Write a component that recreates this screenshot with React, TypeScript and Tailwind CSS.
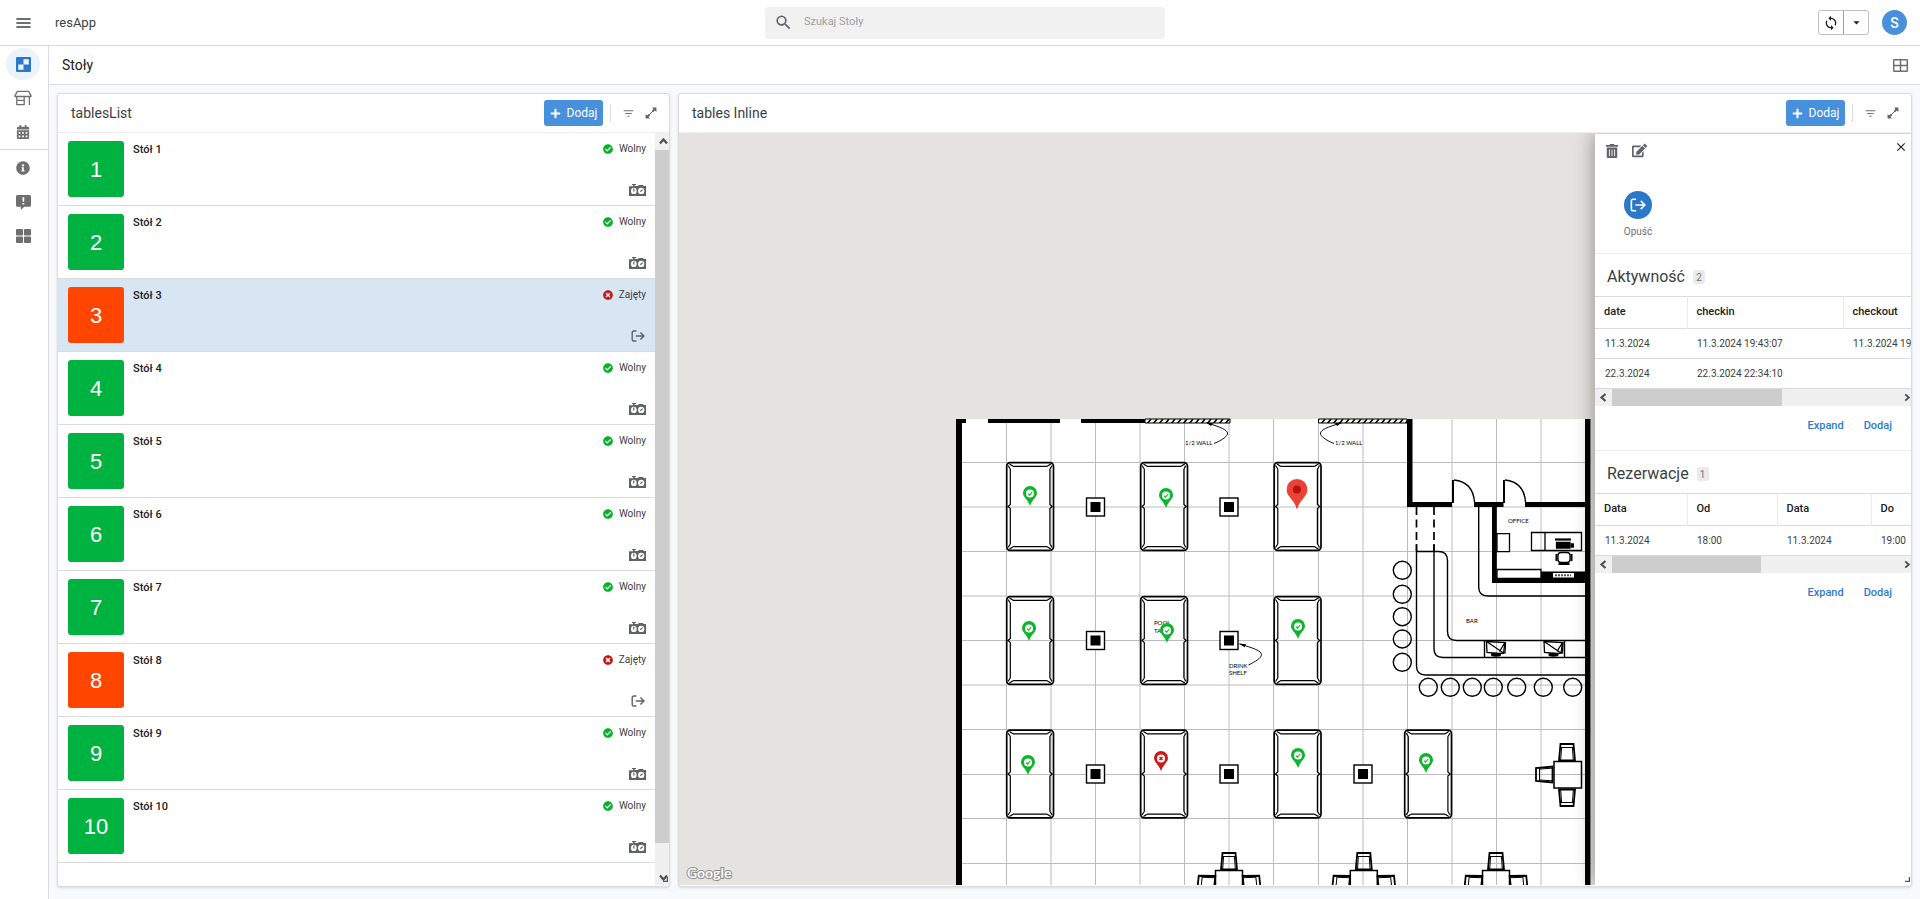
import React from "react";
import { MdMenu, MdSearch, MdSync, MdArrowDropDown, MdFilterList, MdClose } from "react-icons/md";
import { FaCalendarAlt, FaInfoCircle, FaCheckCircle, FaTimesCircle, FaTrashAlt, FaEdit, FaPlus } from "react-icons/fa";

/* ---------- icons ---------- */

function BoardIcon() {
  return (
    <svg width="15" height="15" viewBox="0 0 15 15" aria-hidden="true">
      <rect width="15" height="15" rx="1" fill="#2c78c8" />
      <rect x="7.5" y="2.2" width="5.3" height="5.3" fill="#eaf3fc" />
      <rect x="2.2" y="7.5" width="5.3" height="5.3" fill="#eaf3fc" />
    </svg>
  );
}

function StoreIcon() {
  return (
    <svg width="18" height="16" viewBox="0 0 18 16" fill="none" stroke="#6f6f6f" strokeWidth="1.3" aria-hidden="true">
      <path d="M3.4 1.4h11.2l2.4 4.2v.9H1v-.9z" strokeLinejoin="round" />
      <path d="M2.8 6.5v8.1h7.4V6.5M15.4 6.5v8.6M2.8 10.4h7.4" />
    </svg>
  );
}

function FeedbackIcon() {
  return (
    <svg width="15" height="15" viewBox="0 0 15 15" aria-hidden="true">
      <path d="M1.5 0h12Q15 0 15 1.5v8.700q0 1.500-1.500 1.500H8.300L4.800 15v-3.300H1.500Q0 11.700 0 10.200V1.500Q0 0 1.500 0z" fill="#6f6f6f" />
      <path d="M6.400 2.200h2l-.3 4.600H6.700zM6.500 7.900h1.800v1.700H6.500z" fill="#fff" />
    </svg>
  );
}

function TilesIcon() {
  return (
    <svg width="15" height="14" viewBox="0 0 15 14" fill="#6f6f6f" aria-hidden="true">
      <rect width="7" height="6.5" rx="1" />
      <rect x="8" width="7" height="6.5" rx="1" />
      <rect y="7.5" width="7" height="6.5" rx="1" />
      <rect x="8" y="7.5" width="7" height="6.5" rx="1" />
    </svg>
  );
}

function GridIcon() {
  return (
    <svg width="15" height="13" viewBox="0 0 15 13" fill="none" stroke="#6f6f6f" strokeWidth="1.5" aria-hidden="true">
      <rect x=".7" y=".7" width="13.6" height="11.6" rx=".8" />
      <path d="M7.5 .7v11.6M.7 6.5h13.6" />
    </svg>
  );
}

function ExpandIcon() {
  return (
    <svg width="12" height="12" viewBox="0 0 12 12" fill="#5f6368" aria-hidden="true">
      <path d="M7 .6h4.4V5L9.9 3.5 8.3 5.1 6.9 3.7 8.500 2.100zM5 11.400H.6V7l1.500 1.500 1.600-1.600 1.400 1.400-1.600 1.600z" />
      <path d="M2 10 10 2" stroke="#5f6368" strokeWidth="1" />
    </svg>
  );
}

function ExitIcon({ size = 14, color = "#5f6368" }: { size?: number; color?: string }) {
  return (
    <svg width={size} height={size} viewBox="0 0 14 14" fill="none" stroke={color} strokeWidth="1.4" aria-hidden="true">
      <path d="M5.400 2H2.800Q1.200 2 1.200 3.600v6.800q0 1.600 1.600 1.600h2.600" />
      <path d="M4.700 7h8.200M9.400 3.400 13 7l-3.600 3.600" />
    </svg>
  );
}

function TimerIcon() {
  return (
    <svg width="17" height="12" viewBox="0 0 17 12" aria-hidden="true">
      <path d="M3 0h4v1H5.700v1H9l.8-.9h4L14.800 2H17v10H0V2.200h4V1H3z" fill="#5f6368" />
      <ellipse cx="4.800" cy="6.900" rx="2.800" ry="3.200" fill="#fff" />
      <ellipse cx="12.200" cy="6.900" rx="3.100" ry="3.200" fill="#fff" />
      <path d="M4.800 4.600v2.900M11.300 7.800l2.300-2.200" stroke="#5f6368" strokeWidth="1.200" />
    </svg>
  );
}

function Chevron({ dir }: { dir: "up" | "down" | "left" | "right" }) {
  const d = {
    up: "M1 6.500 4.500 2.500 8 6.500",
    down: "M1 2.500 4.500 6.500 8 2.500",
    left: "M6.500 1 2.500 4.500 6.500 8",
    right: "M2.500 1 6.500 4.500 2.500 8",
  }[dir];
  return (
    <svg width="9" height="9" viewBox="0 0 9 9" fill="none" stroke="#505050" strokeWidth="2.200" aria-hidden="true">
      <path d={d} />
    </svg>
  );
}

function ResizeCorner() {
  return (
    <svg width="5" height="5" viewBox="0 0 5 5" className="absolute right-px bottom-[3px]" aria-hidden="true">
      <path d="M0 4.500H4.500V0" fill="none" stroke="#555" strokeWidth="1.500" />
    </svg>
  );
}

/* ---------- card ---------- */

function Card({ title, children }: { title: string; children: React.ReactNode }) {
  return (
    <section className="flex min-h-0 min-w-0 flex-col rounded-[3px] border border-[#dadce0] bg-white pb-px shadow-sm">
      <header className="flex h-[39px] shrink-0 items-center border-b border-[#eeeeee] pr-3 pl-[13px]">
        <h2 className="flex-1 text-sm text-[#3c4043]">{title}</h2>
        <button className="flex h-[26px] w-[59px] items-center justify-center gap-[6px] rounded-[3px] bg-[#4790dc] text-xs text-white">
          <FaPlus size={11} />
          Dodaj
        </button>
        <span className="mr-[11px] ml-[7px] h-[18px] w-px bg-[#dadce0]" />
        <button aria-label="Filtruj" className="mr-[10px] text-[#6f6f6f]">
          <MdFilterList size={13} />
        </button>
        <button aria-label="Rozwiń">
          <ExpandIcon />
        </button>
      </header>
      {children}
    </section>
  );
}

/* ---------- list ---------- */

const tables = [
  { n: 1, busy: false },
  { n: 2, busy: false },
  { n: 3, busy: true },
  { n: 4, busy: false },
  { n: 5, busy: false },
  { n: 6, busy: false },
  { n: 7, busy: false },
  { n: 8, busy: true },
  { n: 9, busy: false },
  { n: 10, busy: false },
];

function TableList() {
  return (
    <div className="relative flex min-h-0 flex-1">
      <ul className="min-w-0 flex-1 overflow-hidden">
        {tables.map(({ n, busy }) => (
          <li
            key={n}
            className={`flex h-[73px] border-b border-[#dadce0] py-2 pr-[9px] pl-[10px] ${n === 3 ? "bg-[#d8e6f3]" : "bg-white"}`}
          >
            <span
              className={`flex size-14 items-center justify-center rounded-[3px] font-['Liberation_Sans',sans-serif] text-[22px] text-white ${
                busy ? "bg-[#ff4500]" : "bg-[#00b341]"
              }`}
            >
              {n}
            </span>
            <h3 className="ml-[9px] flex-1 text-[11px] leading-[17px] font-medium text-[#202124]">Stół {n}</h3>
            <div className="flex flex-col items-end justify-between">
              <span className="flex items-center gap-[6px] text-[10px] leading-4 text-[#3c4043]">
                {busy ? <FaTimesCircle size={10} color="#cc1010" /> : <FaCheckCircle size={10} color="#00b327" />}
                {busy ? "Zajęty" : "Wolny"}
              </span>
              <button aria-label={busy ? "Opuść" : "Zajmij"} className="flex h-[14px] w-[17px] items-center justify-center">
                {busy ? <ExitIcon /> : <TimerIcon />}
              </button>
            </div>
          </li>
        ))}
      </ul>
      <div className="flex w-[14px] flex-col items-center bg-[#f0f0f0]">
        <span className="flex h-[17px] items-center pl-[3px]">
          <Chevron dir="up" />
        </span>
        <span className="w-full flex-1 bg-[#cdcdcd]" />
        <span className="flex h-[42px] items-end pb-[3px] pl-[3px]">
          <Chevron dir="down" />
        </span>
      </div>
      <ResizeCorner />
    </div>
  );
}

/* ---------- floor plan ---------- */

const columnsX = [1006.500, 1051, 1095.500, 1140, 1184.500, 1229, 1273.500, 1318.500, 1363, 1407.500, 1452, 1496.500, 1541];
const rowsY = [462.500, 507, 551.500, 596, 640.500, 685, 729.500, 774.500, 818.500, 863.500];

const poolTables: [number, number][] = [
  [1006, 462], [1140, 462], [1273.500, 462],
  [1006, 596], [1140, 596], [1273.500, 596],
  [1006, 729.500], [1140, 729.500], [1273.500, 729.500], [1404, 729.500],
];

const pillars: [number, number][] = [
  [1095.500, 507], [1229, 507], [1095.500, 640.500], [1229, 640.500], [1095.500, 774], [1229, 774], [1363, 774],
];

function PoolTable({ x, y }: { x: number; y: number }) {
  return (
    <g transform={`translate(${x} ${y})`} fill="none" stroke="#000">
      <rect x=".7" y=".7" width="46.800" height="87.600" rx="3.500" strokeWidth="1.700" />
      <path
        strokeWidth="1.200"
        d="M4.300 7v35.500L2 44.500l2.300 2V82M43.900 7v35.500l2.300 2-2.300 2V82M7 4.300h34.200M7 84.700h34.200M2 3.500 4.300 7M3.500 2 7 4.300M46.200 3.500 43.900 7M44.700 2l-3.500 2.300M2 85.500 4.300 82M3.500 87 7 84.700M46.200 85.500 43.900 82M44.700 87l-3.500-2.300"
      />
    </g>
  );
}

function Chair({ x, y, turn }: { x: number; y: number; turn: number }) {
  return (
    <g transform={`translate(${x} ${y}) rotate(${turn})`} fill="none" stroke="#000">
      <path d="M-6.500-17h13L8-.5H-8z" strokeWidth="1.800" />
      <path d="M-6.500-13.500h13M-5.500-13-6.300-1M5.500-13 6.300-1" strokeWidth="1" />
    </g>
  );
}

function CardTable({ x, y }: { x: number; y: number }) {
  return (
    <g>
      <rect x={x - 13.500} y={y - 13.500} width="27" height="27" fill="none" stroke="#000" strokeWidth="1.500" />
      <Chair x={x} y={y - 14} turn={0} />
      <Chair x={x - 14} y={y} turn={-84} />
      <Chair x={x + 14} y={y} turn={84} />
    </g>
  );
}

function Till({ x }: { x: number }) {
  return (
    <g stroke="#000" fill="none" strokeWidth="1.300">
      <path d={`M${x} 641.500l19 1-.5 10.500-6 .5-12-1z`} />
      <path d={`M${x} 641.500l17 11.500 1.500-10.500-5.500 9`} />
      <ellipse cx={x + 9.500} cy="654.800" rx="4.500" ry="1.300" fill="#000" />
    </g>
  );
}

function FloorPlan() {
  return (
    <svg width="1232" height="752" viewBox="679 133 1232 752" className="max-w-none" role="img" aria-label="Plan sali">
      <defs>
        <pattern id="hatch" width="6" height="5" patternUnits="userSpaceOnUse" patternTransform="translate(0 419)">
          <path d="M1 5 5 0" stroke="#000" strokeWidth="1.600" />
        </pattern>
      </defs>
      <rect x="956" y="419" width="635" height="466" fill="#fff" />
      <g stroke="#bcbcbc" strokeWidth="1">
        {columnsX.map((x) => (
          <path key={x} d={`M${x} 419V885`} />
        ))}
        {rowsY.map((y) => (
          <path key={y} d={`M962 ${y}H1591`} />
        ))}
      </g>

      {/* outer and inner walls */}
      <g fill="#000">
        <path d="M956 419h10v4h-4v462h-6zM988 419h72v4h-72zM1081 419h64v4h-64zM1585 419h5.500v466H1585z" />
        <path d="M1407 419h5.500v83H1452v5h-45zM1474 502h29.500v5H1474zM1525 502h60v5h-60z" />
        <path d="M1492 507h4.800v71H1541v-6.500h44V583h-93z" />
      </g>
      <g stroke="#000" strokeWidth="1">
        <path d="M1145 419h85v4h-85z" fill="url(#hatch)" />
        <path d="M1318.500 419h88.500v4h-88.500z" fill="url(#hatch)" />
      </g>
      <rect x="1553" y="573" width="21" height="4.500" fill="#fff" />
      <path d="M1555 575.300h16" stroke="#555" strokeWidth="2" strokeDasharray="2 1" />

      {/* doors */}
      <g fill="none" stroke="#000" strokeWidth="1.400">
        <path d="M1454 480q19 2 20.500 22M1505 480q19 2 20.500 22" />
        <path d="M1453 503V480M1504 503V480" strokeWidth="2" />
      </g>

      {/* bar counter */}
      <g fill="none" stroke="#000" strokeWidth="1.400">
        <path d="M1416.500 507v44M1434 507v44" strokeWidth="1.700" strokeDasharray="8 4.500" />
        <path d="M1416.500 544v122q0 9 9 9H1585" />
        <path d="M1434 544v105q0 8.500 9 8.500h142" />
        <path d="M1416.500 551.500h22q9 0 9 9v71q0 9 9 9H1585" />
        <path d="M1478.700 507v80q0 9 9 9H1585" />
        <path d="M1484.500 640.500v17M1564.500 640.500v17" />
      </g>
      <Till x={1486.500} />
      <Till x={1544} />
      <g fill="none" stroke="#000" strokeWidth="1.400">
        {[570.300, 594.300, 616.700, 639, 662.300].map((y) => (
          <circle key={y} cx="1402.300" cy={y} r="9" />
        ))}
        {[1428.300, 1450.300, 1472.300, 1493.300, 1516.700, 1543.300, 1572.700].map((x) => (
          <circle key={x} cx={x} cy="687.300" r="9" />
        ))}
      </g>

      {/* office */}
      <g fill="none" stroke="#000" strokeWidth="1.300">
        <path d="M1497 533.700h12.500v18H1497zM1497 569.500h44v9h-44zM1531.500 532.500h13.500v18h-13.500zM1545 532.500h36.500v18H1545z" />
        <path d="M1555 539.500h16" strokeWidth="2.200" />
        <path d="M1556.500 542.500h13.500v5.500h-13.500zM1571.500 544h1.800v3h-1.800z" fill="#000" />
        <rect x="1558" y="552.500" width="12" height="10" rx="3" />
        <path d="M1556.500 554v7M1571.500 554v7M1558.500 564h11" strokeWidth="2" />
      </g>

      {poolTables.map(([x, y]) => (
        <PoolTable key={`${x}-${y}`} x={x} y={y} />
      ))}
      {pillars.map(([x, y]) => (
        <g key={`${x}-${y}`}>
          <rect x={x - 9} y={y - 9} width="18" height="18" fill="#fff" stroke="#000" strokeWidth="1.400" />
          <rect x={x - 5} y={y - 5} width="10" height="10" />
        </g>
      ))}

      {/* seating */}
      <rect x="1554" y="761.500" width="27.500" height="26.500" fill="none" stroke="#000" strokeWidth="1.500" />
      <Chair x={1567} y={761} turn={0} />
      <Chair x={1567} y={789} turn={180} />
      <Chair x={1553} y={774.500} turn={-90} />
      <CardTable x={1229} y={884} />
      <CardTable x={1363.800} y={884} />
      <CardTable x={1496} y={884} />

      {/* call-outs */}
      <g fill="none" stroke="#111" strokeWidth="1">
        <path d="M1207 423c14 4 20 7 20.500 10s-5 7-13.500 10.500" />
        <path d="M1341 423c-14 4-20 7-20.500 10s5 7 13.500 10.500" />
        <path d="M1239.500 644c14 4 22 7 22 10.500s-6 7-13 10.500" />
      </g>
      <path d="M1206 422.500l7 .5-2 3zM1342 422.500l-7 .5 2 3zM1239 643.500l7 .7-1.500 3z" />
      <g className="font-[Lato,sans-serif] text-[6px]" fill="#000">
        <text x="1185" y="445">1/2 WALL</text>
        <text x="1335" y="445">1/2 WALL</text>
        <text x="1154" y="625">POOL</text>
        <text x="1154" y="633">TABLE</text>
        <text x="1229" y="668">DRINK</text>
        <text x="1229" y="675">SHELF</text>
        <text x="1508" y="523">OFFICE</text>
        <text x="1466" y="623">BAR</text>
      </g>
    </svg>
  );
}

type Pin = { id: number; x: number; y: number; kind: "free" | "busy" | "active" };

/* x, y is the point on the map canvas that the tip touches */
const pins: Pin[] = [
  { id: 1, x: 351, y: 373, kind: "free" },
  { id: 2, x: 487, y: 375, kind: "free" },
  { id: 3, x: 618, y: 376, kind: "active" },
  { id: 4, x: 350, y: 508, kind: "free" },
  { id: 5, x: 488, y: 510, kind: "free" },
  { id: 6, x: 619, y: 506, kind: "free" },
  { id: 7, x: 349, y: 642, kind: "free" },
  { id: 8, x: 482, y: 638, kind: "busy" },
  { id: 9, x: 619, y: 635, kind: "free" },
  { id: 10, x: 747, y: 640, kind: "free" },
];

const pinShape = "M7 0a7 7 0 0 1 7 7c0 4-4.500 6-7 13C4.500 13 0 11 0 7a7 7 0 0 1 7-7z";

function MapPin({ pin }: { pin: Pin }) {
  const active = pin.kind === "active";
  return (
    <button
      aria-label={`Stół ${pin.id}`}
      className="absolute -translate-x-1/2 -translate-y-full"
      style={{ left: pin.x, top: pin.y }}
    >
      {active ? (
        <svg width="21" height="30" viewBox="0 0 21 30" className="block">
          <path
            d="M10.500 0A10.500 10.500 0 0 1 21 10.500c0 3-1.500 5.500-3.500 8C14 23 12 25 11.300 29q-.8 1.500-1.600 0C9 25 7 23 3.500 18.500 1.500 16 0 13.500 0 10.500A10.500 10.500 0 0 1 10.500 0z"
            fill="#ea4335"
          />
          <circle cx="10.500" cy="10.500" r="4" fill="#b31412" />
        </svg>
      ) : (
        <svg width="14" height="20" viewBox="0 0 14 20" className="block">
          <path d={pinShape} fill={pin.kind === "free" ? "#0cb52b" : "#d01616"} />
          <circle cx="7" cy="7.500" r="4" fill="#fff" />
          {pin.kind === "free" ? (
            <path d="M5 7.700 6.500 9.200 9.200 6" fill="none" stroke="#0cb52b" strokeWidth="1.100" />
          ) : (
            <path d="M5.500 6 8.500 9M8.500 6 5.500 9" stroke="#d01616" strokeWidth="1.500" />
          )}
        </svg>
      )}
    </button>
  );
}

/* ---------- details panel ---------- */

function HScroll({ thumb }: { thumb: string }) {
  return (
    <div className="flex h-[17px] items-center bg-[#f0f0f0]">
      <span className="flex w-[17px] justify-center">
        <Chevron dir="left" />
      </span>
      <span className="flex h-full flex-1">
        <span className={`h-full bg-[#cdcdcd] ${thumb}`} />
      </span>
      <span className="flex w-2 justify-end">
        <Chevron dir="right" />
      </span>
    </div>
  );
}

function SectionTitle({ title, count }: { title: string; count: number }) {
  return (
    <h3 className="flex h-[42px] items-center gap-2 pt-1 pl-3 text-base text-[#3c4043]">
      {title}
      <span className="flex h-[14px] w-3 items-center justify-center rounded-[3px] bg-[#e8eaed] text-[10px] text-[#777]">{count}</span>
    </h3>
  );
}

function DataTable({ widths, head, rows }: { widths: string[]; head: string[]; rows: string[][] }) {
  return (
    <div className="overflow-hidden">
      <table className="w-[460px] table-fixed border-collapse text-left whitespace-nowrap">
        <thead>
          <tr className="h-8 border-y border-[#dadce0] text-[11px] text-[#202124]">
            {head.map((h, i) => (
              <th key={i} className={`border-r border-[#e8eaed] px-[9px] font-medium ${widths[i]}`}>
                {h}
              </th>
            ))}
          </tr>
        </thead>
        <tbody>
          {rows.map((r, i) => (
            <tr key={i} className="h-[30px] border-b border-[#dadce0] text-[10px] text-[#3c4043]">
              {r.map((c, j) => (
                <td key={j} className="px-[10px]">
                  {c}
                </td>
              ))}
            </tr>
          ))}
        </tbody>
      </table>
    </div>
  );
}

function PanelLinks() {
  return (
    <div className="flex h-10 items-center justify-end gap-5 pr-[19px] text-[11px] font-medium text-[#2f7bcb]">
      <a href="#expand">Expand</a>
      <a href="#dodaj">Dodaj</a>
    </div>
  );
}

function DetailsPanel() {
  return (
    <aside className="absolute inset-y-0 right-0 w-[316px] border-t border-[#d5d5d5] bg-white shadow-[0_0_20px_rgba(0,0,0,0.4)]">
      <div className="flex h-[33px] items-center gap-[13px] pr-[3px] pl-[10px] text-[#5f6368]">
        <button aria-label="Usuń">
          <FaTrashAlt size={14} />
        </button>
        <button aria-label="Edytuj">
          <FaEdit size={15} />
        </button>
        <button aria-label="Zamknij" className="mb-[7px] ml-auto text-[#202124]">
          <MdClose size={14} />
        </button>
      </div>
      <div className="flex h-[87px] border-b border-[#eeeeee] pt-6 pl-[25px]">
        <button className="flex w-9 flex-col items-center gap-[5px] text-[10px] leading-4 text-[#6f6f6f]">
          <span className="flex size-7 items-center justify-center rounded-full bg-[#2c78c8]">
            <ExitIcon size={16} color="#fff" />
          </span>
          Opuść
        </button>
      </div>
      <section className="border-b border-[#eeeeee] pb-1">
        <SectionTitle title="Aktywność" count={2} />
        <DataTable
          widths={["w-[92px]", "w-[156px]", ""]}
          head={["date", "checkin", "checkout"]}
          rows={[
            ["11.3.2024", "11.3.2024 19:43:07", "11.3.2024 19:43:10"],
            ["22.3.2024", "22.3.2024 22:34:10", ""],
          ]}
        />
        <HScroll thumb="w-[170px]" />
        <PanelLinks />
      </section>
      <section>
        <SectionTitle title="Rezerwacje" count={1} />
        <DataTable
          widths={["w-[92px]", "w-[90px]", "w-[94px]", ""]}
          head={["Data", "Od", "Data", "Do"]}
          rows={[["11.3.2024", "18:00", "11.3.2024", "19:00"]]}
        />
        <HScroll thumb="w-[149px]" />
        <PanelLinks />
      </section>
      <ResizeCorner />
    </aside>
  );
}

function TablesMap() {
  return (
    <div className="relative min-h-0 flex-1 overflow-hidden bg-[#e4e3df]">
      <FloorPlan />
      {pins.map((p) => (
        <MapPin key={p.id} pin={p} />
      ))}
      <svg width="60" height="24" viewBox="0 0 60 24" className="absolute bottom-0 left-1" aria-label="Google">
        <text x="4" y="17" className="font-[Lato,sans-serif] text-[14px] font-bold" fill="#fff" stroke="#8c8c8c" strokeWidth="2" paintOrder="stroke">
          Google
        </text>
      </svg>
      <DetailsPanel />
    </div>
  );
}

/* ---------- shell ---------- */

function NavItem({ label, active, children }: { label: string; active?: boolean; children: React.ReactNode }) {
  return (
    <a href={`#${label}`} aria-label={label} className="flex h-[34px] w-full items-center justify-center pr-[2px] text-[#6f6f6f]">
      <span className={`flex h-8 w-[34px] items-center justify-center rounded-full ${active ? "bg-[#eaf3fc]" : ""}`}>{children}</span>
    </a>
  );
}

export default function App() {
  return (
    <div className="flex h-screen flex-col bg-white font-[Roboto,sans-serif] text-[#202124]">
      <header className="grid h-[46px] shrink-0 grid-cols-[1fr_400px_1fr] items-center border-b border-[#dadce0] pl-[10px]">
        <div className="flex items-center">
          <button aria-label="Menu" className="ml-1 flex w-[19px] justify-center text-[#3c4043]">
            <MdMenu size={20} />
          </button>
          <span className="ml-[22px] text-[13px] text-[#3c4043]">resApp</span>
        </div>
        <label className="flex h-8 items-center rounded-[4px] bg-[#f1f1f1] pl-[9px]">
          <MdSearch size={19} color="#5f6368" />
          <input
            type="search"
            aria-label="Szukaj Stoły"
            placeholder="Szukaj Stoły"
            className="ml-[11px] flex-1 bg-transparent text-[11px] outline-none placeholder:text-[#a0a0a0]"
          />
        </label>
        <div className="flex items-center justify-end gap-[13px] pr-[13px]">
          <div className="flex h-[25px] w-[51px] rounded-[3px] border border-[#c0c0c0]">
            <button aria-label="Odśwież" className="flex flex-1 items-center justify-center border-r border-[#a0a0a0]">
              <MdSync size={16} />
            </button>
            <button aria-label="Opcje" className="flex flex-1 items-center justify-center">
              <MdArrowDropDown size={15} />
            </button>
          </div>
          <button className="flex size-[25px] items-center justify-center rounded-full bg-[#4790dc] text-sm font-medium text-white">S</button>
        </div>
      </header>
      <div className="flex min-h-0 flex-1">
        <nav className="flex w-[49px] shrink-0 flex-col border-r border-[#dadce0] pt-px">
          <NavItem label="stoly" active>
            <BoardIcon />
          </NavItem>
          <NavItem label="lokale">
            <StoreIcon />
          </NavItem>
          <NavItem label="rezerwacje">
            <FaCalendarAlt size={14} />
          </NavItem>
          <hr className="mb-px border-[#dadce0]" />
          <NavItem label="informacje">
            <FaInfoCircle size={14} />
          </NavItem>
          <NavItem label="opinie">
            <FeedbackIcon />
          </NavItem>
          <NavItem label="aplikacje">
            <TilesIcon />
          </NavItem>
        </nav>
        <div className="flex min-w-0 flex-1 flex-col">
          <div className="flex h-[39px] shrink-0 items-center justify-between border-b border-[#dadce0] pr-3 pl-[13px]">
            <h1 className="text-sm">Stoły</h1>
            <button aria-label="Układ">
              <GridIcon />
            </button>
          </div>
          <main className="grid min-h-0 flex-1 grid-cols-[613fr_1234fr] grid-rows-[minmax(0,1fr)] gap-2 bg-[#f8f9fb] px-2 pt-2 pb-3">
            <Card title="tablesList">
              <TableList />
            </Card>
            <Card title="tables Inline">
              <TablesMap />
            </Card>
          </main>
        </div>
      </div>
    </div>
  );
}
